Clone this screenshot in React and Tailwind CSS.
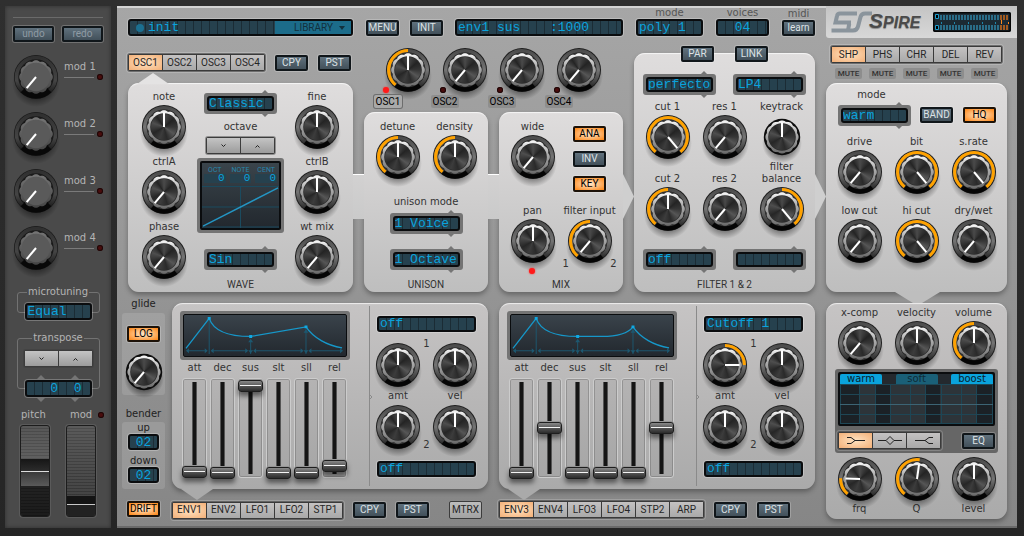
import React from "react";

const polar = (cx, cy, r, deg) => {
  const a = ((deg - 90) * Math.PI) / 180;
  return [cx + r * Math.cos(a), cy + r * Math.sin(a)];
};

const arcPath = (cx, cy, r, from, to) => {
  const [x0, y0] = polar(cx, cy, r, from);
  const [x1, y1] = polar(cx, cy, r, to);
  return `M${x0.toFixed(2)} ${y0.toFixed(2)} A${r} ${r} 0 ${to - from > 180 ? 1 : 0} 1 ${x1.toFixed(2)} ${y1.toFixed(2)}`;
};

const scallop = (cx, cy, r, depth) => {
  const pts = [];
  for (let d = 0; d < 360; d += 3) {
    const rr = r - depth + depth * Math.abs(Math.sin((((d + 15) * 6) * Math.PI) / 180));
    const [x, y] = polar(cx, cy, rr, d);
    pts.push(`${x.toFixed(2)},${y.toFixed(2)}`);
  }
  return pts.join(" ");
};

const RING = scallop(24, 24, 16.8, 1.2);
const RING_SMALL = scallop(24, 24, 16.6, 1);

function Defs() {
  return (
    <svg className="absolute size-0" aria-hidden="true">
      <defs>
        <linearGradient id="rim" x1="0" y1="0" x2="0" y2="1">
          <stop offset="0" stopColor="#4c4c4c" />
          <stop offset="0.5" stopColor="#747474" />
          <stop offset="0.8" stopColor="#444444" />
          <stop offset="1" stopColor="#1c1c1c" />
        </linearGradient>
        <linearGradient id="silver" x1="0" y1="0" x2="0" y2="1">
          <stop offset="0" stopColor="#fafafa" />
          <stop offset="0.35" stopColor="#b4b4b4" />
          <stop offset="0.7" stopColor="#8e8e8e" />
          <stop offset="1" stopColor="#686868" />
        </linearGradient>
        <linearGradient id="dimCap" x1="0" y1="0" x2="0" y2="1">
          <stop offset="0" stopColor="#757575" />
          <stop offset="1" stopColor="#444444" />
        </linearGradient>
        <linearGradient id="dimRim" x1="0" y1="0" x2="0" y2="1">
          <stop offset="0" stopColor="#303030" />
          <stop offset="0.6" stopColor="#444444" />
          <stop offset="1" stopColor="#111111" />
        </linearGradient>
        <radialGradient id="drop">
          <stop offset="0.6" stopColor="#000000" stopOpacity="0.45" />
          <stop offset="1" stopColor="#000000" stopOpacity="0" />
        </radialGradient>
      </defs>
    </svg>
  );
}

function Dial({ name, angle = 0, arc, kind = "normal" }) {
  const [px, py] = polar(24, 24, 14.5, angle);
  return (
    <span className="relative block size-12 shrink-0">
      <svg viewBox="0 0 48 48" className="absolute inset-0 size-12 overflow-visible" aria-hidden="true">
        <ellipse cx="24" cy="30" rx={kind === "small" ? 20 : 24} ry={kind === "small" ? 20 : 24} fill="url(#drop)" />
        {kind === "normal" && (
          <g>
            <circle cx="24" cy="24" r="22" fill="#1e1e1e" />
            <circle cx="24" cy="24" r="19.2" fill="none" stroke="url(#rim)" strokeWidth="3.6" />
            <path d={arcPath(24, 24, 18.6, 142, 218)} fill="none" stroke="#050505" strokeWidth="6" />
            <circle cx="24" cy="24" r="17.2" fill="#333333" />
            <polygon points={RING} fill="url(#silver)" />
            <circle cx="24" cy="24" r="13.8" fill="#2c2c2c" />
            {arc && <path d={arcPath(24, 24, 19.4, arc[0], arc[1])} fill="none" stroke="#ffa200" strokeWidth="3" />}
          </g>
        )}
        {kind === "small" && (
          <g>
            <circle cx="24" cy="24" r="18.2" fill="#0c0c0c" />
            <polygon points={RING_SMALL} fill="url(#silver)" />
            <circle cx="24" cy="24" r="13.8" fill="#2c2c2c" />
          </g>
        )}
        {kind === "dim" && (
          <g>
            <circle cx="24" cy="24" r="22" fill="#191919" />
            <circle cx="24" cy="24" r="19.5" fill="none" stroke="url(#dimRim)" strokeWidth="3.6" />
            <path d={arcPath(24, 24, 18.6, 135, 225)} fill="none" stroke="#080808" strokeWidth="6" />
            <polygon points={RING} fill="url(#dimCap)" />
            <circle cx="24" cy="24" r="14.2" fill="#5a5a5a" />
          </g>
        )}
      </svg>
      {kind !== "dim" && (
        <span className="absolute inset-[11px] rounded-full bg-[conic-gradient(#4a4a4a,#242424_50deg,#363636_90deg,#565656_125deg,#2a2a2a_165deg,#3c3c3c_200deg,#262626_240deg,#4e4e4e_290deg,#242424_325deg,#4a4a4a)]" />
      )}
      <svg viewBox="0 0 48 48" className="absolute inset-0 size-12" aria-hidden="true">
        <line x1="24" y1="24" x2={px} y2={py} stroke="#ffffff" strokeWidth="2" />
      </svg>
      <input
        type="range"
        min="-140"
        max="140"
        defaultValue={angle}
        aria-label={name}
        className="absolute inset-0 m-0 size-full cursor-pointer opacity-0"
      />
    </span>
  );
}

function Knob({ label, below = false, ...dial }) {
  return (
    <label className={`flex w-12 shrink-0 items-center whitespace-nowrap ${below ? "flex-col-reverse" : "flex-col"}`}>
      <span className="leading-3">{label}</span>
      <Dial {...dial} />
    </label>
  );
}

function Led({ on = false, className = "" }) {
  return (
    <span
      className={`block size-[6px] shrink-0 rounded-full ${
        on ? "bg-[#ff1a1a] shadow-[0_0_2px_#ff3030]" : "bg-[#4a0c0c] shadow-[inset_0_0_0_1px_#1c0808]"
      } ${className}`}
    />
  );
}

function DarkButton({ children, className = "w-[33px]", lit = false }) {
  return (
    <button
      type="button"
      className={`flex h-4 shrink-0 items-center justify-center rounded-[2px] border-2 font-[Roboto,sans-serif] text-[10px] leading-3 shadow-[0_0_0_1px_rgba(255,255,255,0.22)] ${
        lit
          ? "border-[#1d1208] bg-[radial-gradient(#ffe9cf,#ff8a1c_95%)] text-black"
          : "border-[#10161a] bg-linear-to-b from-[#60717d] to-[#42505a] text-[#dde2e5]"
      } ${className}`}
    >
      {children}
    </button>
  );
}

function Tabs({ items, name }) {
  return (
    <div
      role="tablist"
      aria-label={name}
      className="flex gap-px rounded-[2px] bg-[#3a3a3a] p-px shadow-[0_0_0_1px_rgba(40,40,40,0.5),0_0_0_2px_rgba(255,255,255,0.2)]"
    >
      {items.map((t, i) => (
        <button
          key={i}
          type="button"
          role="tab"
          aria-selected={i === 0}
          className={`flex h-[15px] w-[33px] items-center justify-center font-[Roboto,sans-serif] text-[10px] leading-3 text-[#262626] ${
            i === 0 ? "bg-[radial-gradient(#ffe3c2,#f3b078)]" : "bg-linear-to-b from-[#c4c2c2] to-[#a9a9a9]"
          }`}
        >
          {t}
        </button>
      ))}
    </div>
  );
}

const LCD =
  "rounded-[3px] border-2 border-[#0a0c0e] bg-[#20303a] bg-[repeating-linear-gradient(90deg,#26414e_0_7px,#1b2c35_7px_8px)] font-['Liberation_Mono',monospace] text-[13px] leading-[12px] text-[#0aa3dd]";
const EDGE = "shadow-[0_0_0_1px_rgba(255,255,255,0.25)]";

function LcdSelect({ value, name, className = "h-4 w-full" }) {
  return (
    <select aria-label={name} defaultValue={value} className={`block appearance-none pl-px outline-none ${LCD} ${EDGE} ${className}`}>
      <option>{value}</option>
    </select>
  );
}

function Tri({ up = false, className = "" }) {
  return (
    <svg viewBox="0 0 8 4" className={`h-1 w-2 ${className}`} aria-hidden="true">
      <path d={up ? "M0 4L4 0L8 4Z" : "M0 0L4 4L8 0Z"} fill="#757575" />
    </svg>
  );
}

function Framed({ value, name }) {
  return (
    <div className="relative w-[73px] shrink-0 rounded-[3px] bg-[#747474] p-[3px]">
      <Tri up className="absolute -top-[3px] right-2" />
      <Tri className="absolute right-2 -bottom-[3px]" />
      <select aria-label={name} defaultValue={value} className={`block h-[15px] w-full appearance-none leading-[11px]! outline-none ${LCD}`}>
        <option>{value}</option>
      </select>
    </div>
  );
}

const PANEL =
  "relative rounded-[11px] bg-linear-to-b shadow-[inset_0_2px_1px_-1px_rgba(255,255,255,0.7),0_3px_5px_rgba(0,0,0,0.3)]";
const LIGHT = "from-[#dfdddd] to-[#bebebe]";
const MID = "from-[#c6c4c4] to-[#aaaaaa]";

function Title({ children, className = "" }) {
  return <h2 className={`text-center font-[Roboto,sans-serif] text-[10px] leading-3 ${className}`}>{children}</h2>;
}

function Bridge() {
  return (
    <span className="absolute -right-[11px] bottom-[73px] z-10 h-[45px] w-[11px] border-t border-white bg-linear-to-b from-[#d2d1d1] to-[#cacaca]" />
  );
}

function Arrow() {
  return (
    <span className="absolute -right-[11px] bottom-[73px] z-10 h-[45px] w-[11px] bg-[#cfcfcf] [clip-path:polygon(0_0,100%_50%,0_100%)]" />
  );
}

function Stepper({ name }) {
  return (
    <div role="group" aria-label={name} className="flex w-[69px] gap-px rounded-[2px] bg-[#3c3c3c] p-px shadow-[0_0_0_1px_rgba(60,60,60,0.45)]">
      {["down", "up"].map((d) => (
        <button key={d} type="button" aria-label={`${name} ${d}`} className="flex h-[15px] flex-1 items-center justify-center bg-linear-to-b from-[#c4c4c4] to-[#9c9c9c]">
          <svg viewBox="0 0 7 4" className="h-1 w-[7px]" fill="none" stroke="#222222" aria-hidden="true">
            <path d={d === "down" ? "M1.5 0.5L3.5 2.5L5.5 0.5" : "M1.5 3.5L3.5 1.5L5.5 3.5"} />
          </svg>
        </button>
      ))}
    </div>
  );
}

function Aside() {
  return (
    <aside className="flex w-[106px] shrink-0 flex-col bg-[#4a4a4a] pt-[11px] pb-[11px] text-[#b4b4b4] shadow-[inset_0_0_4px_#2f2f2f]">
      <hr className="mx-2 border-[#6a6a6a]" />
      <div className="mt-2 flex justify-between px-2">
        <DarkButton className="w-[41px] text-[#8f9ba4]!">undo</DarkButton>
        <DarkButton className="w-[41px] text-[#8f9ba4]!">redo</DarkButton>
      </div>
      <div className="mt-[11px] flex flex-col gap-[9px] pl-[7px]">
        {[1, 2, 3, 4].map((n) => (
          <div key={n} className="flex items-start pr-2">
            <Dial name={`mod ${n}`} angle={-140} kind="dim" />
            <div className="flex-1 pt-2 pl-1">
              <span className="block leading-3">mod {n}</span>
              <span className="mt-px flex items-center gap-[3px]">
                <span className="h-px flex-1 bg-[#7a7a7a]" />
                <Led />
              </span>
            </div>
          </div>
        ))}
      </div>
      <fieldset className="mx-auto mt-[14px] w-[83px] rounded-[3px] border border-[#727272]">
        <legend className="mx-auto px-px leading-3">microtuning</legend>
        <div className="mx-auto mt-[5px] -mb-2 w-[67px]">
          <LcdSelect value="Equal" name="microtuning" className="h-[17px] w-full" />
        </div>
      </fieldset>
      <fieldset className="mx-auto mt-[19px] w-[83px] rounded-[3px] border border-[#727272]">
        <legend className="mx-auto px-px leading-3">transpose</legend>
        <div className="mt-[6px] flex justify-center">
          <Stepper name="transpose" />
        </div>
        <div className="mx-auto mt-2 -mb-[14px] w-[67px]">
          <div className="flex justify-around">
            <Tri up />
            <Tri up />
          </div>
          <div className={`my-px flex h-[17px] items-center justify-around pl-4 ${LCD} ${EDGE}`}>
            <output>0</output>
            <output>0</output>
          </div>
          <div className="flex justify-around">
            <Tri />
            <Tri />
          </div>
        </div>
      </fieldset>
      <div className="mt-[20px] flex items-center pr-[7px] pl-4 leading-3">
        <span>pitch</span>
        <span className="flex-1 pl-6">mod</span>
        <Led />
      </div>
      <div className="mt-1 flex justify-between px-[15px]">
        <Wheel name="pitch" />
        <Wheel name="mod" low />
      </div>
    </aside>
  );
}

function Wheel({ name, low = false }) {
  return (
    <div className="relative h-[92px] w-[30px] overflow-hidden rounded-[3px] border border-[#1c1c1c] bg-[#444444] shadow-[0_0_0_1px_#5a5a5a]">
      <div className="flex h-full flex-col bg-[repeating-linear-gradient(0deg,rgba(0,0,0,0.22)_0_1px,transparent_1px_3px)]">
        {low ? (
          <>
            <div className="h-[70px] bg-linear-to-b from-white/12 to-transparent" />
            <div className="h-2 bg-[#141414]" />
            <div className="h-px bg-[#c8c8c8]" />
            <div className="flex-1 bg-[#222222]" />
          </>
        ) : (
          <>
            <div className="h-[33px] bg-linear-to-b from-white/10 to-white/15" />
            <div className="h-[12px] bg-linear-to-b from-[#161616] to-[#2c2c2c]" />
            <div className="h-px bg-[#dddddd]" />
            <div className="h-[14px] bg-linear-to-b from-[#3a3a3a] to-[#5a5a5a]" />
            <div className="flex-1 bg-linear-to-b from-black/50 to-black/60" />
          </>
        )}
      </div>
      <input type="range" aria-label={`${name} wheel`} className="absolute inset-0 m-0 size-full opacity-0" />
    </div>
  );
}

function Header() {
  return (
    <header className="flex h-10 items-end pb-[10px]">
      <div className={`flex h-[17px] min-w-0 flex-[223_1_0] items-center pl-[6px] ${LCD} ${EDGE}`}>
        <span className="size-2 shrink-0 rounded-full bg-[#1b6f90]" />
        <input readOnly aria-label="preset" value="init" className="h-3 w-0 min-w-0 flex-1 pl-1 outline-none" />
        <button type="button" className="flex h-[13px] w-[76px] shrink-0 items-center justify-end gap-[6px] bg-[#1c6c8a] pr-[6px] font-[Roboto,sans-serif] text-[10px] text-[#12303d]">
          LIBRARY
          <svg viewBox="0 0 6 4" className="h-1 w-[6px]" aria-hidden="true">
            <path d="M0 0H6L3 4Z" fill="#12303d" />
          </svg>
        </button>
      </div>
      <DarkButton className="ml-[13px] w-[33px]">MENU</DarkButton>
      <DarkButton className="ml-[11px] w-[33px]">INIT</DarkButton>
      <output className={`ml-3 flex h-[17px] w-[168px] shrink-0 items-center justify-between pr-[32px] pl-px whitespace-nowrap ${LCD} ${EDGE}`}>
        <span>env1 sus</span>
        <span>:1000</span>
      </output>
      <label className="ml-[13px] w-[67px] shrink-0 text-center text-[#555555]">
        <span className="block leading-3">mode</span>
        <LcdSelect value="poly 1" name="mode" className="h-[17px] w-full" />
      </label>
      <label className="ml-[13px] w-[53px] shrink-0 text-center text-[#555555]">
        <span className="block leading-3">voices</span>
        <input readOnly value="04" className={`block h-[17px] w-full text-center outline-none ${LCD} ${EDGE}`} />
      </label>
      <div className="ml-[13px] w-[33px] shrink-0 text-center text-[#555555]">
        <span className="block leading-3">midi</span>
        <DarkButton className="w-full">learn</DarkButton>
      </div>
    </header>
  );
}

function Wave() {
  return (
    <section className="flex min-w-0 flex-col pt-2">
      <div className="flex items-center">
        <Tabs name="oscillator" items={["OSC1", "OSC2", "OSC3", "OSC4"]} />
        <div className="ml-[10px] flex gap-[10px]">
          <DarkButton>CPY</DarkButton>
          <DarkButton>PST</DarkButton>
        </div>
      </div>
      <div className={`mt-3 flex flex-1 justify-between px-3 pt-2 pb-px ${PANEL} ${LIGHT}`}>
        <span className="absolute -top-[10px] left-[9px] h-[11px] w-8 bg-[#e4e3e3] [clip-path:polygon(50%_0,100%_100%,0_100%)]" />
        <Bridge />
        <div className="flex flex-col gap-[5px]">
          <Knob label="note" />
          <Knob label="ctrlA" angle={-140} />
          <Knob label="phase" angle={-140} />
        </div>
        <div className="flex flex-col items-center pt-[2px]">
          <Framed value="Classic" name="wave type" />
          <span className="mt-[7px] leading-3">octave</span>
          <div className="mt-1">
            <Stepper name="octave" />
          </div>
          <WaveScreen />
          <Framed value="Sin" name="waveform" />
          <Title className="mt-[9px]">WAVE</Title>
        </div>
        <div className="flex flex-col gap-[5px]">
          <Knob label="fine" />
          <Knob label="ctrlB" />
          <Knob label="wt mix" angle={-140} />
        </div>
      </div>
    </section>
  );
}

function WaveScreen() {
  return (
    <div className="mt-1 mb-4 h-[75px] w-[87px] rounded-[3px] bg-[#747474] p-[3px]">
      <div className="flex h-full flex-col rounded-[2px] border-2 border-[#0a0c0e] bg-linear-to-b from-[#3a444b] to-[#22282e]">
        <div className="grid grid-cols-3 pt-[3px] text-center">
          {["OCT", "NOTE", "CENT"].map((t) => (
            <div key={t}>
              <div className="font-[Roboto,sans-serif] text-[7px] leading-2 text-[#2787ad]">{t}</div>
              <div className="mx-[2px] bg-[#26414e] pr-px text-right font-['Liberation_Mono',monospace] text-[11px] leading-[9px] text-[#0aa3dd]">0</div>
            </div>
          ))}
        </div>
        <svg viewBox="0 0 77 44" preserveAspectRatio="none" className="mt-[2px] min-h-0 w-full flex-1" fill="none" aria-hidden="true">
          <path d="M0 1.5H77M0 22.5H77M0 43H77M38.5 1V44" stroke="#1b4c60" />
          <path d="M1 42L76 3" stroke="#2496c4" strokeWidth="1.4" />
        </svg>
      </div>
    </div>
  );
}

function Middle() {
  return (
    <section className="flex min-w-0 flex-col">
      <div className="flex justify-center gap-[9px]">
        {[1, 2, 3, 4].map((n) => (
          <div key={n} className="relative w-12">
            <Dial name={`OSC${n} level`} angle={n === 1 ? 0 : -140} arc={n === 1 ? [-140, 0] : undefined} />
            <Led on={n === 1} className="absolute top-[41px] -left-px" />
            <button
              type="button"
              className={`relative mt-px -ml-[10px] flex h-[13px] w-7 items-center justify-center rounded-[2px] font-[Roboto,sans-serif] text-[10px] text-black ${
                n === 1 ? "bg-[#a9a9a9] shadow-[0_0_0_1px_#6d6d6d]" : "bg-[#8e8e8e]"
              }`}
            >
              OSC{n}
            </button>
          </div>
        ))}
      </div>
      <div className="mt-1 grid flex-1 grid-cols-2 gap-[11px]">
        <div className={`flex flex-col items-center pt-[9px] pb-px ${PANEL} ${LIGHT}`}>
          <Bridge />
          <div className="flex gap-[9px]">
            <Knob label="detune" arc={[-140, 0]} />
            <Knob label="density" arc={[-140, 0]} />
          </div>
          <span className="mt-[15px] mb-[5px] leading-3">unison mode</span>
          <Framed value="1 Voice" name="unison mode" />
          <div className="h-[15px]" />
          <Framed value="1 Octave" name="unison octave" />
          <Title className="mt-[9px]">UNISON</Title>
        </div>
        <div className={`flex flex-col items-center pt-[9px] pb-px ${PANEL} ${LIGHT}`}>
          <Arrow />
          <div className="flex gap-[9px]">
            <Knob label="wide" angle={-140} />
            <div className="flex w-12 flex-col items-center gap-[9px] pt-[5px]">
              <DarkButton lit>ANA</DarkButton>
              <DarkButton>INV</DarkButton>
              <DarkButton lit>KEY</DarkButton>
            </div>
          </div>
          <div className="mt-[13px] flex gap-[9px]">
            <div className="relative">
              <Knob label="pan" />
              <Led on className="absolute -bottom-[9px] left-[20px]" />
            </div>
            <div className="relative">
              <Knob label="filter input" angle={-140} arc={[-140, 0]} />
              <span className="absolute -bottom-[5px] -left-[3px] leading-3">1</span>
              <span className="absolute -right-[3px] -bottom-[5px] leading-3">2</span>
            </div>
          </div>
          <Title className="mt-[14px]">MIX</Title>
        </div>
      </div>
    </section>
  );
}

function Filter() {
  return (
    <section className="flex min-w-0 flex-col">
      <div className="z-10 flex justify-center gap-[21px]">
        <DarkButton>PAR</DarkButton>
        <DarkButton>LINK</DarkButton>
      </div>
      <div className={`-mt-[9px] flex flex-1 flex-col items-center pt-[21px] pb-px ${PANEL} ${LIGHT}`}>
        <Arrow />
        <div className="flex gap-[17px]">
          <Framed value="perfecto" name="filter type" />
          <Framed value="LP4" name="filter slope" />
        </div>
        <div className="mt-[6px] flex gap-[9px]">
          <Knob label="cut 1" angle={140} arc={[-140, 140]} />
          <Knob label="res 1" angle={-140} />
          <Knob label="keytrack" kind="small" />
        </div>
        <div className="flex items-end gap-[9px]">
          <Knob label="cut 2" arc={[-140, 0]} />
          <Knob label="res 2" angle={-140} />
          <Knob
            label={
              <span className="block text-center">
                filter
                <br />
                balance
              </span>
            }
            angle={140}
            arc={[0, 140]}
          />
        </div>
        <div className="mt-4 flex gap-[17px]">
          <Framed value="off" name="filter 2 type" />
          <Framed value="" name="filter 2 slope" />
        </div>
        <Title className="mt-[9px]">FILTER 1 &amp; 2</Title>
      </div>
    </section>
  );
}

function EnvScreen({ bend }) {
  return (
    <div className="ml-2 h-[49px] w-[170px] rounded-[3px] bg-[#747474] p-[3px]">
      <svg viewBox="0 0 164 43" preserveAspectRatio="none" className="block size-full rounded-[2px] border border-[#0a0c0e] bg-linear-to-b from-[#3a434b] to-[#22282e]" fill="none" aria-hidden="true">
        <path d="M3 37.5H23M28 37.5H63M71 37.5H119M127 37.5H159M25.5 4V41M67.500 26V41M123.5 15V41" stroke="#1d5870" />
        <path
          d="M2 37.5L5 35V40ZM24 37.5L21 35V40ZM27 37.5L30 35V40ZM65 37.5L62 35V40ZM70 37.5L73 35V40ZM121 37.5L118 35V40ZM126 37.5L129 35V40ZM161 37.5L158 35V40ZM67.500 25L65 28.500H70ZM67.500 40L65 37H70ZM123.5 15L121 18.500H126ZM123.5 40L121 37H126Z"
          fill="#1d5870"
        />
        <path
          d={`M2 35L25.500 3.500C30 17 44 22.500 67.500 22.500${bend ? "H92C108 22.500 118 20 123.500 12.500" : "L123.500 12.500"}C131 24 145 32 160 34.500`}
          stroke="#1697c9"
          strokeWidth="1.3"
        />
        <path d="M24 2h3v3h-3zM66 21h3v3h-3zM122 11h3v3h-3z" fill="#0fa9e4" />
      </svg>
    </div>
  );
}

function Fader({ label, at }) {
  return (
    <label className="flex w-[25px] flex-col items-center">
      <span className="mb-1 leading-3">{label}</span>
      <span className="relative flex h-[100px] w-full justify-center rounded-[3px] border border-[#cccccc] bg-black/3 py-[3px] shadow-[inset_0_0_0_1px_rgba(90,90,90,0.35)]">
        <span className="w-[5px] border-x border-[#555555] bg-[#151515]" />
        <span
          className="absolute -inset-x-px h-3 rounded-[3px] border border-[#1e1e1e] bg-linear-to-b from-[#8a8a8a] via-[#555555] to-[#2c2c2c] shadow-[0_4px_5px_rgba(0,0,0,0.5),0_-1px_0_#999999]"
          style={{ top: at - 7 }}
        >
          <span className="mx-px mt-1 block h-px bg-[#f4f4f4]" />
        </span>
        <input type="range" aria-label={label} defaultValue={100 - at} className="absolute inset-0 m-0 size-full opacity-0" />
      </span>
    </label>
  );
}

function Envelope({ faders, bend, slot1, amt1, tabs, name, extra }) {
  const names = ["att", "dec", "sus", "slt", "sll", "rel"];
  return (
    <section className="min-w-0 flex-1 pt-[5px]">
      <div className={`flex h-[186px] ${PANEL} ${MID}`}>
        <span className="absolute -bottom-[11px] left-[9px] h-[11px] w-8 bg-[#aaaaaa] [clip-path:polygon(0_0,100%_0,50%_100%)]" />
        <div className="relative my-[3px] w-[198px] shrink-0 border-r border-[#8a8a8a] pt-[5px]">
          <EnvScreen bend={bend} />
          <div className="mt-[2px] flex gap-[3px] pl-[10px]">
            {names.map((n, i) => (
              <Fader key={n} label={n} at={faders[i]} />
            ))}
          </div>
          <svg viewBox="0 0 4 8" className="absolute top-[87px] -right-1 h-2 w-1" fill="none" stroke="#8a8a8a" aria-hidden="true">
            <path d="M0 1L3 4L0 7" />
          </svg>
        </div>
        <div className="flex min-w-0 flex-1 flex-col pt-[13px] pr-3 pl-[7px]">
          <LcdSelect value={slot1} name={`${name} target 1`} />
          <div className="mt-[9px] flex justify-center">
            <Dial name="amt 1" {...amt1} />
            <span className="w-[9px] shrink-0 text-center leading-[6px]">1</span>
            <Dial name="vel 1" />
          </div>
          <div className="mt-px flex justify-center gap-[9px] text-center leading-3">
            <span className="w-12 shrink-0">amt</span>
            <span className="w-12 shrink-0">vel</span>
          </div>
          <div className="mt-px flex justify-center">
            <Dial name="amt 2" />
            <span className="w-[9px] shrink-0 self-end text-center leading-3">2</span>
            <Dial name="vel 2" />
          </div>
          <div className="mt-[10px]">
            <LcdSelect value="off" name={`${name} target 2`} />
          </div>
        </div>
      </div>
      <div className="mt-3 flex items-center">
        <Tabs name={name} items={tabs} />
        <div className="ml-[10px] flex gap-[10px]">
          <DarkButton>CPY</DarkButton>
          <DarkButton>PST</DarkButton>
        </div>
        {extra}
      </div>
    </section>
  );
}

function Glide() {
  return (
    <section className="flex w-[43px] shrink-0 flex-col items-center text-[#222222]">
      <span className="leading-3">glide</span>
      <div className="mt-[3px] flex w-full flex-col items-center rounded-[3px] bg-white/12 pt-[13px]">
        <DarkButton lit>LOG</DarkButton>
        <div className="mt-[6px] -mb-px">
          <Dial name="glide" angle={-140} kind="small" />
        </div>
      </div>
      <span className="mt-[13px] leading-3">bender</span>
      <div className="mt-[2px] flex w-full flex-col items-center rounded-[3px] bg-white/12 pb-[6px]">
        <label className="flex flex-col items-center">
          <span className="leading-3">up</span>
          <input readOnly value="02" className={`h-4 w-[31px] text-center outline-none ${LCD} ${EDGE}`} />
        </label>
        <label className="mt-[5px] flex flex-col items-center">
          <span className="leading-3">down</span>
          <input readOnly value="02" className={`h-4 w-[31px] text-center outline-none ${LCD} ${EDGE}`} />
        </label>
      </div>
      <div className="mt-3">
        <DarkButton lit>DRIFT</DarkButton>
      </div>
    </section>
  );
}

function Brand() {
  const ticks = Array.from({ length: 24 }, (_, i) => 4 + i * 3);
  return (
    <div className="flex h-8 items-center rounded-bl-[3px] bg-linear-to-b from-[#c4c4c4] to-[#d8d8d8] pr-[6px] pl-[5px]">
      <svg viewBox="0 0 42 24" className="h-6 w-[42px] shrink-0" fill="none" stroke="#8a949c" strokeWidth="4" aria-hidden="true">
        <path d="M26 3.500H9Q6.500 3.500 6 6L4.500 12.500H20Q18.500 12.500 18 15L17 20.500" />
        <path d="M0.500 20.500H22Q26 20.500 27 16.500L29.500 7Q30.500 3.500 34 3.500H41" />
      </svg>
      <h1 className="-ml-1 font-['Liberation_Sans',sans-serif] text-[21px] leading-6 font-bold text-[#4a4a4a] italic [text-shadow:0_1px_1px_rgba(0,0,0,0.35)]">
        S<span className="text-[16px]">PIRE</span>
      </h1>
      <svg viewBox="0 0 78 20" className="ml-auto h-5 w-[78px] rounded-[2px] bg-[#20303a]" aria-hidden="true">
        <rect x="0.5" y="0.5" width="77" height="19" rx="2" fill="#1c2a33" stroke="#050505" strokeWidth="2" />
        {ticks.slice(1).map((x, i) => (
          <g key={i} fill={i > 19 ? "#a05a20" : "#2a6d88"}>
            <rect x={x} y="3" width="2" height="5" />
            <rect x={x} y="13" width="2" height="5" />
          </g>
        ))}
        <path d="M8 10h1v2h-1zM21 10h1v2h-1zM35 10h1v2h-1zM49 10h1v2h-1zM62 10h1v2h-1z" fill="#1d87ad" />
        <path d="M68 8h1v4h-1zM75 10h1v2h-1z" fill="#ff8a1c" />
        <path d="M2.500 2.500h3v4h-3zM2.500 13.500h3v4h-3z" stroke="#1d9ccb" />
      </svg>
    </div>
  );
}

function EqScreen() {
  const tabs = [
    ["warm", true],
    ["soft", false],
    ["boost", true],
  ];
  return (
    <div className="mx-[9px] mt-[2px] rounded-[3px] bg-[#666666] p-[3px]">
      <div className="rounded-[2px] border-2 border-[#0a0c0e] bg-[#24292e]">
        <div className="flex justify-between">
          {tabs.map(([t, on]) => (
            <button
              key={t}
              type="button"
              className={`h-[10px] w-[42px] rounded-t-[2px] leading-[10px] ${on ? "bg-[#0aa3dc] text-[#08222e]" : "bg-[#1a6078] text-[#0e2c38]"}`}
            >
              {t}
            </button>
          ))}
        </div>
        <svg viewBox="0 0 153 40" preserveAspectRatio="none" className="block h-10 w-full" aria-hidden="true">
          <rect width="153" height="40" fill="#2d3439" />
          <path d="M0 0h19v40H0zM36 0h14v40H36zM85 0h15v40H85zM137 0h16v40H137z" fill="#151b20" opacity="0.75" />
          <path d="M0 0.500H153M0 10.500H153M0 30.500H153M0 39.500H153M0.500 0V40M19.500 0V40M35.500 0V40M50.500 0V40M70.500 0V40M85.500 0V40M101.500 0V40M121.500 0V40M136.500 0V40M152.500 0V40" stroke="#1e4655" fill="none" />
          <path d="M0 20.500H153" stroke="#3c6474" />
        </svg>
      </div>
      <div className="mt-[6px] flex items-center justify-between pb-px">
        <Tabs
          name="eq band"
          items={[
            <svg key="l" viewBox="0 0 18 9" className="h-[9px] w-[18px]" fill="none" stroke="#222222" aria-label="low">
              <path d="M0 1.500H4L8 4.500H18M0 7.500H4L8 4.500" />
            </svg>,
            <svg key="m" viewBox="0 0 24 9" className="h-[9px] w-[24px]" fill="none" stroke="#222222" aria-label="mid">
              <path d="M0 4.500H8L12 0.500L16 4.500H24M8 4.500L12 8.500L16 4.500" />
            </svg>,
            <svg key="h" viewBox="0 0 18 9" className="h-[9px] w-[18px]" fill="none" stroke="#222222" aria-label="high">
              <path d="M18 1.500H14L10 4.500H0M18 7.500H14L10 4.500" />
            </svg>,
          ]}
        />
        <DarkButton>EQ</DarkButton>
      </div>
    </div>
  );
}

function Effects() {
  return (
    <div className="flex w-[191px] shrink-0 flex-col">
      <Brand />
      <div className="mt-2 pl-[5px]">
        <div className="flex">
          <Tabs name="effects" items={["SHP", "PHS", "CHR", "DEL", "REV"]} />
        </div>
        <div className="mt-[5px] flex gap-[7px] pl-1">
          {[1, 2, 3, 4, 5].map((n) => (
            <button key={n} type="button" className="h-[11px] w-[27px] rounded-[2px] bg-[#8d8d8d] text-center font-[Roboto,sans-serif] text-[8px] leading-[11px] font-medium text-[#333333]">
              MUTE
            </button>
          ))}
        </div>
      </div>
      <section className={`mt-[4px] mr-[10px] flex flex-col pt-[6px] pb-[27px] ${PANEL} ${LIGHT}`}>
        <span className="absolute -bottom-[11px] left-[69px] z-10 h-[11px] w-[45px] bg-[#bebebe] [clip-path:polygon(0_0,100%_0,60%_100%,40%_100%)]" />
        <div className="flex items-end pl-3">
          <div className="text-center">
            <span className="mb-1 block pr-[6px] leading-3">mode</span>
            <Framed value="warm" name="shaper mode" />
          </div>
          <div className="mb-[3px] ml-[9px] flex gap-[10px]">
            <DarkButton>BAND</DarkButton>
            <DarkButton lit>HQ</DarkButton>
          </div>
        </div>
        <div className="mt-[10px] flex justify-center gap-[9px]">
          <Knob label="drive" angle={-140} />
          <Knob label="bit" angle={140} arc={[-140, 140]} />
          <Knob label="s.rate" angle={140} arc={[-140, 140]} />
        </div>
        <div className="mt-[9px] flex justify-center gap-[9px]">
          <Knob label="low cut" angle={-140} />
          <Knob label="hi cut" angle={140} arc={[-140, 140]} />
          <Knob label="dry/wet" angle={-140} />
        </div>
      </section>
      <section className={`mt-[11px] mr-[10px] flex flex-col pt-1 pb-1 ${PANEL} ${MID}`}>
        <div className="flex justify-center gap-[9px]">
          <Knob label="x-comp" angle={-140} />
          <Knob label="velocity" />
          <Knob label="volume" arc={[-140, 0]} />
        </div>
        <EqScreen />
        <div className="mt-[2px] flex justify-center gap-[9px]">
          <Knob below label="frq" angle={-88} arc={[-140, -88]} />
          <Knob below label="Q" angle={8} arc={[-140, 8]} />
          <Knob below label="level" />
        </div>
      </section>
    </div>
  );
}

export default function App() {
  return (
    <div className="flex min-h-screen gap-[6px] bg-linear-to-b from-[#2f2f2f] to-[#252525] pt-[6px] pr-[7px] pb-2 pl-[5px] font-['DejaVu_Sans',sans-serif] text-[10px] leading-3 text-[#333333]">
      <Defs />
      <Aside />
      <main className="flex min-w-0 flex-1 bg-linear-to-b from-[#a6a6a6] to-[#868686] pb-[7px] shadow-[inset_0_2px_0_#d4d4d4,inset_0_-2px_0_#6a6a6a]">
        <div className="flex min-w-0 flex-1 flex-col pr-[11px]">
          <div className="pl-[11px]">
            <Header />
            <div className="grid grid-cols-[225fr_259fr_181fr] gap-[11px]">
              <Wave />
              <Middle />
              <Filter />
            </div>
          </div>
          <div className="mt-[6px] flex pl-[5px]">
            <Glide />
            <div className="ml-[7px] flex min-w-0 flex-1 gap-[11px]">
              <Envelope
                name="envelope 1"
                faders={[94, 95, 8, 95, 95, 88]}
                slot1="off"
                amt1={{}}
                tabs={["ENV1", "ENV2", "LFO1", "LFO2", "STP1"]}
                extra={
                  <button type="button" className="mr-[6px] ml-auto h-[18px] w-[33px] rounded-[2px] border border-[#3c3c3c] bg-linear-to-b from-[#bdbdbd] to-[#a2a2a2] font-[Roboto,sans-serif] text-[10px] text-[#262626]">
                    MTRX
                  </button>
                }
              />
              <Envelope
                name="envelope 3"
                bend
                faders={[95, 50, 95, 95, 95, 50]}
                slot1="Cutoff 1"
                amt1={{ angle: 90, arc: [0, 90] }}
                tabs={["ENV3", "ENV4", "LFO3", "LFO4", "STP2", "ARP"]}
              />
            </div>
          </div>
        </div>
        <Effects />
      </main>
    </div>
  );
}
